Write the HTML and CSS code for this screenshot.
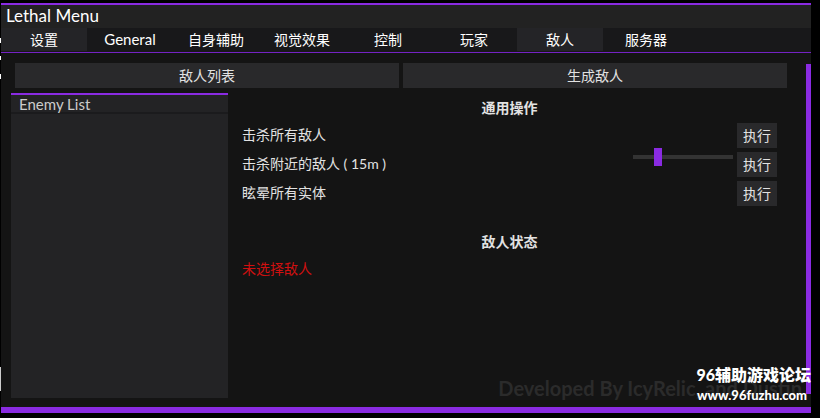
FILE: index.html
```html
<!DOCTYPE html>
<html lang="zh-CN">
<head>
  <meta charset="UTF-8" />
  <meta name="viewport" content="width=device-width, initial-scale=1.0"/>
  <title>Lethal Menu</title>
  <link rel="stylesheet" href="styles.css">
</head>
<body>
  <div class="window">
    <header class="title">Lethal Menu</header>

    <nav class="tabs">
      <button class="tab active">设置</button>
      <button class="tab latin">General</button>
      <button class="tab">自身辅助</button>
      <button class="tab">视觉效果</button>
      <button class="tab">控制</button>
      <button class="tab">玩家</button>
      <button class="tab active">敌人</button>
      <button class="tab">服务器</button>
    </nav>

    <main class="content">
      <div class="subtabs">
        <button class="btn">敌人列表</button>
        <button class="btn">生成敌人</button>
      </div>

      <div class="columns">
        <section class="list">
          <h3 class="list-title latin">Enemy List</h3>
          <div class="list-body"></div>
        </section>

        <section class="actions">
          <h2 class="heading">通用操作</h2>
          <div class="row">
            <span class="label">击杀所有敌人</span>
            <button class="btn">执行</button>
          </div>
          <div class="row">
            <label class="label" for="radius">击杀附近的敌人 ( 15m )</label>
            <input class="slider" type="range" id="radius" min="0" max="92" value="21">
            <button class="btn">执行</button>
          </div>
          <div class="row">
            <span class="label">眩晕所有实体</span>
            <button class="btn">执行</button>
          </div>

          <h2 class="heading status">敌人状态</h2>
          <p class="error">未选择敌人</p>
        </section>
      </div>

      <div class="scrollbar"></div>
      <p class="credits">Developed By IcyRelic, and Dustin</p>
    </main>
  </div>

  <div class="watermark">
    <p class="site-name">96辅助游戏论坛</p>
    <p class="site-url">www.96fuzhu.com</p>
  </div>
</body>
</html>
```
FILE: styles.css
```css
* {
  box-sizing: border-box;
}
body {
  margin: 0;
  padding: 3px 9px 5px 1px;
  min-height: 100vh;
  display: flex;
  position: relative;
  color: #e2e2e2;
  font-family: Lato, "Noto Sans CJK SC", sans-serif;
  font-size: 14px;
  line-height: 20px;
  /* bits of the game window showing at the left edge */
  background:
    linear-gradient(#fff, #fff) 0 38px / 1px 5px no-repeat,
    linear-gradient(#fff, #fff) 0 56px / 1px 4px no-repeat,
    linear-gradient(#fff, #fff) 0 74px / 1px 5px no-repeat,
    linear-gradient(#ccc, #ccc) 0 367px / 1px 24px no-repeat,
    #000;
}
h2, h3, p {
  margin: 0;
}
button {
  border: none;
  padding: 0;
  color: inherit;
  font: inherit;
  cursor: pointer;
}
.window {
  flex: 1;
  display: flex;
  flex-direction: column;
  background: #141414;
  border-top: 2px solid #8a2be2;
  border-bottom: 6px solid #8a2be2;
}
.title {
  height: 23px;
  padding-left: 5px;
  background: #222;
  color: #fff;
  font-size: 17px;
  line-height: 22px;
}
.tabs {
  display: flex;
  height: 25px;
  padding-bottom: 1px;
  background: #18181a;
  border-bottom: 1px solid #7422c4;
}
.tab {
  width: 86px;
  background: transparent;
  color: #fff;
  line-height: 23px;
}
.tab.active {
  background: #242427;
}
.content {
  flex: 1;
  display: flex;
  flex-direction: column;
  gap: 5px;
  position: relative;
  padding: 10px 24px 9px 10px;
}
.subtabs {
  display: flex;
  gap: 4px;
  padding-left: 4px;
}
.btn {
  height: 25px;
  background: #29292b;
}
.subtabs .btn {
  flex: 1;
}
.columns {
  flex: 1;
  display: flex;
  gap: 14px;
}
.list {
  width: 217px;
  display: flex;
  flex-direction: column;
  gap: 2px;
  background: #1b1b1d;
  border-top: 2px solid #8a2be2;
}
.list-title {
  height: 17px;
  padding-left: 8px;
  background: #232325;
  color: #ccc;
  font-weight: normal;
  line-height: 18px;
}
.latin {
  font-size: 15px;
}
.list-body {
  flex: 1;
  background: #232325;
}
.actions {
  flex: 1;
  display: flex;
  flex-direction: column;
  gap: 4px;
  padding: 4px 10px 0 0;
}
.heading {
  height: 22px;
  font-size: 14px;
  line-height: 22px;
  text-align: center;
}
.status {
  margin-top: 21px;
}
.row {
  display: flex;
  gap: 4px;
}
.row .btn {
  width: 40px;
}
.label {
  flex: 1;
  line-height: 23px;
}
.slider {
  appearance: none;
  width: 100px;
  height: 18px;
  margin: -4px 0 0;
  background: linear-gradient(#333, #333) center / 100% 4px no-repeat;
}
.slider::-webkit-slider-thumb {
  appearance: none;
  width: 8px;
  height: 18px;
  background: #8a2be2;
}
.error {
  color: #d01010;
  line-height: 24px;
}
.scrollbar {
  position: absolute;
  top: 11px;
  right: 0;
  bottom: 13px;
  width: 5px;
  background: #8a2be2;
}
.credits {
  position: absolute;
  right: 9px;
  bottom: 7px;
  color: #2b2b2b;
  font-size: 20px;
  font-weight: bold;
  line-height: 24px;
}
.watermark {
  position: absolute;
  right: 9px;
  bottom: 13px;
  color: #fff;
  font-weight: 900;
  text-align: right;
}
.site-name {
  font-size: 16px;
}
.site-url {
  padding-right: 4px;
  font-size: 13px;
}
```
